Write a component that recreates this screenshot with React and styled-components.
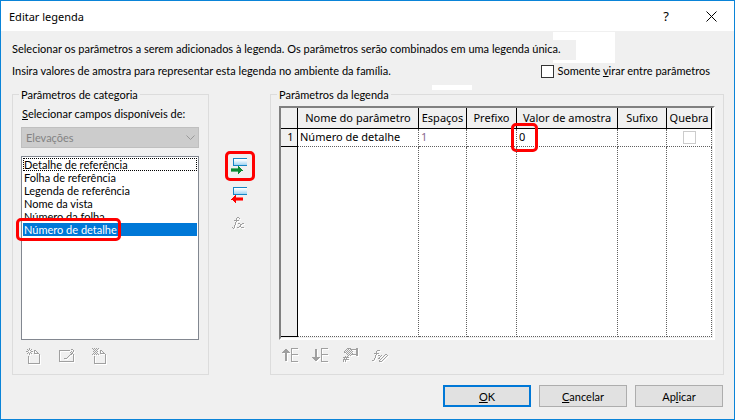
import React from 'react';
import styled, {createGlobalStyle, css} from "styled-components";

const GlobalStyle = createGlobalStyle`
  *{
    box-sizing: border-box;
  }
  body{
    margin: 0;
    background-color: #f0f0f0;
  }
`;

const uiFont = css`
  font-family: "Lato", "Noto Sans", sans-serif;
  font-size: 11px;
  color: #000;
`;

const gridFont = css`
  font-family: "Noto Sans", "Open Sans", sans-serif;
  font-size: 11px;
  color: #000;
`;

const Dialog = styled.div`
  ${uiFont}
  min-height: 100vh;
  display: flex;
  flex-direction: column;
  border: 1px solid #0a84d8;
  background-color: #f0f0f0;
  position: relative;
`;

const TitleBar = styled.header`
  display: flex;
  align-items: center;
  height: 30px;
  padding-left: 8px;
  padding-right: 8px;
  background-color: #fff;
`;

const Title = styled.h1`
  ${gridFont}
  flex: 1;
  margin: 0;
  font-weight: 400;
`;

const TitleButton = styled.button`
  ${gridFont}
  display: flex;
  align-items: center;
  justify-content: center;
  width: 30px;
  height: 24px;
  margin-left: 15px;
  padding: 0;
  border: none;
  background: none;
  font-size: 13px;
`;

const Content = styled.main`
  position: relative;
  flex: 1;
  display: flex;
  flex-direction: column;
  padding: 7px 10px 12px 11px;
`;

const IntroRow = styled.div`
  display: flex;
  justify-content: space-between;
  line-height: 22px;
  padding-right: 14px;
  white-space: nowrap;
`;

const CheckLabel = styled.label`
  display: flex;
  align-items: center;
  gap: 4px;
`;

const CheckBox = styled.input`
  appearance: none;
  width: 13px;
  height: 13px;
  margin: 0;
  border: 1px solid ${props => props.disabled ? "#ccc" : "#333"};
  background-color: #fff;
`;

const Patch = styled.span`
  position: absolute;
  left: ${props => props.$x}px;
  top: ${props => props.$y}px;
  width: ${props => props.$w}px;
  height: ${props => props.$h}px;
  background-color: ${props => props.$color || "#fff"};
`;

const Columns = styled.div`
  flex: 1;
  display: grid;
  grid-template-columns: 197px 61px 1fr;
  padding-top: 5px;
`;

const Group = styled.fieldset`
  min-width: 0;
  margin: 0;
  padding: ${props => props.$narrow ? "5px 9px 10px 8px" : "4px 8px 10px 8px"};
  border: 1px solid #dcdcdc;
`;

const Legend = styled.legend`
  margin-left: -2px;
  padding: 0 2px;
  line-height: 15px;
`;

const FieldLabel = styled.label`
  display: block;
  padding-left: 1px;
  line-height: 14px;
  margin-bottom: 6px;
`;

const DropDown = styled.div`
  position: relative;
  margin-bottom: 8px;
  svg{
    position: absolute;
    right: 4px;
    top: 8px;
  }
`;

const DropDownSelect = styled.select`
  ${uiFont}
  appearance: none;
  display: block;
  width: 100%;
  height: 21px;
  padding: 0 4px;
  border: 1px solid #bfbfbf;
  border-radius: 0;
  background-color: #ccc;
  color: #838383;
  opacity: 1;
`;

const ListWrapper = styled.div`
  position: relative;
`;

const List = styled.select`
  ${uiFont}
  appearance: none;
  display: block;
  width: 100%;
  height: 184px;
  padding: 1px;
  border: 1px solid #828790;
  border-radius: 0;
  background-color: #fff;
  overflow: hidden;
  outline: none;
`;

const ListItem = styled.option`
  height: 13px;
  min-height: 13px;
  padding: 0 1px;
  line-height: 13px;
  color: #000;
  &:first-child{
    outline: 1px dotted #000;
    outline-offset: -1px;
  }
  &:checked{
    background: #0078d7 linear-gradient(#0078d7, #0078d7);
    color: #fff;
    -webkit-text-fill-color: #fff;
  }
`;

const Callout = styled.span`
  position: absolute;
  left: ${props => props.$x}px;
  top: ${props => props.$y}px;
  width: ${props => props.$w}px;
  height: ${props => props.$h}px;
  border: 3px solid #f00;
  border-radius: 5px;
  pointer-events: none;
`;

const Tools = styled.div`
  display: flex;
  gap: ${props => props.$gap}px;
  padding-top: 8px;
  padding-left: ${props => props.$left}px;
`;

const ToolButton = styled.button`
  display: block;
  width: 18px;
  height: 16px;
  padding: 0;
  border: none;
  background: none;
  svg{
    display: block;
  }
`;

const Transfer = styled.div`
  display: flex;
  flex-direction: column;
  align-items: center;
  padding-top: 64px;
`;

const TransferButton = styled.button`
  position: relative;
  display: flex;
  align-items: center;
  justify-content: center;
  width: 30px;
  height: 29px;
  padding: 0 2px 0 0;
  border: none;
  background: none;
`;

const GridFrame = styled.div`
  padding: 0 1px 1px 0;
  border-style: solid;
  border-width: 2px;
  border-color: #808080 #fff #fff #808080;
`;

const Grid = styled.table`
  ${gridFont}
  width: 100%;
  table-layout: fixed;
  border-collapse: separate;
  border-spacing: 0;
  background-color: #fff;
`;

const HeadCell = styled.th`
  height: 21px;
  padding: 0;
  border-right: 1px solid #000;
  border-bottom: 1px solid #000;
  background-color: #f0f0f0;
  font-weight: 400;
  line-height: 18px;
  white-space: nowrap;
  text-align: center;
`;

const RowHead = styled(HeadCell)`
  height: ${props => props.$tall ? 190 : 18}px;
  line-height: 15px;
  padding-left: 3px;
  vertical-align: top;
`;

const Cell = styled.td`
  position: relative;
  padding: 0 2px;
  border-right: 1px dotted #606060;
  border-bottom: 1px dotted #606060;
  line-height: 15px;
  vertical-align: top;
  white-space: nowrap;
  color: ${props => props.$muted ? "#8a6a8e" : "#000"};
  input{
    display: block;
    margin: 2px auto 0;
  }
`;

const Footer = styled.footer`
  display: flex;
  justify-content: flex-end;
  gap: 8px;
  padding-top: 10px;
  padding-right: 1px;
`;

const Button = styled.button`
  ${uiFont}
  width: 88px;
  height: 22px;
  padding: 0;
  border: ${props => props.$primary ? "2px solid #0078d7" : "1px solid #adadad"};
  background-color: #e1e1e1;
`;

const ICONS = {
    create: [
        "...#...........",
        ".#.#.#.........",
        "..#.#...##.....",
        "##...##.#.#....",
        "..#.#...#..#...",
        ".#.#.#..#####..",
        "...#.........#.",
        ".............#.",
        "..#..........#.",
        "..#..........#.",
        "..#..........#.",
        "..#..........#.",
        "..#..........#.",
        "..#..........#.",
        "..#..........#.",
        "..############."
    ],
    rename: [
        "",
        "............##.",
        "###########...#",
        "#...........#.#",
        "#..........#.#.",
        "#...........##.",
        "#..........##.#",
        "#.........#...#",
        "#........#....#",
        "#.......#.....#",
        "#....###......#",
        "#.............#",
        "#.............#",
        "###############"
    ],
    remove: [
        "#.#.#.#........",
        ".#.#.#.........",
        "..#.#...##.....",
        ".#.#.#..#.#....",
        "..#.#...#..#...",
        ".#.#.#..#####..",
        "#.#.#.#......#.",
        ".............#.",
        "..#..........#.",
        "..#..........#.",
        "..#..........#.",
        "..#..........#.",
        "..#..........#.",
        "..#..........#.",
        "..#..........#.",
        "..############."
    ],
    up: [
        ".........#######",
        "...##....#",
        "..####...#",
        ".######..#",
        "########.#",
        "...##....#",
        "...##....#######",
        "...##....#",
        "...##....#",
        "...##....#",
        "...##....#",
        "...##....#",
        "...##....#",
        ".........#######"
    ],
    down: [
        ".........#######",
        "...##....#",
        "...##....#",
        "...##....#",
        "...##....#",
        "...##....#",
        "...##....#######",
        "...##....#",
        "...##....#",
        "########.#",
        ".######..#",
        "..####...#",
        "...##....#",
        ".........#######"
    ],
    sample: [
        ".....####.....##",
        "....#.#.########",
        "...#.#.#.#....##",
        "..#.#.#.#.#...##",
        "..##.#.#.#....##",
        "....#.#.#.#...##",
        ".....#.#.#######",
        "......#.#.....##",
        "...#.#..........",
        ".######.........",
        "..#.#...........",
        ".######.........",
        ".#.#............",
        ".#.#............"
    ],
    formulaEdit: [
        "",
        "",
        ".....###........",
        "....#...........",
        "....#...........",
        "..#####.........",
        "....#........##.",
        "...#..##.#..#..#",
        "...#....#..#..#.",
        "...#...#..#..#..",
        "..#...##.#..#...",
        "..#.....#..#....",
        "##.....#..#.....",
        ".......###......"
    ],
    formula: [
        ".....##.....",
        "....#..#....",
        "....#.......",
        "..#####.....",
        "....#.......",
        "...#........",
        "...#..##..##",
        "...#....##..",
        "..#.....#...",
        "..#....##...",
        "#.#..##..###",
        ".#.........."
    ]
};

const toPath = rows => rows.map((row, y) => row.split("").map((dot, x) => (
    dot === "#" ? `M${x} ${y}h1v1h-1z` : ""
)).join("")).join("");

// disabled toolbar glyph: grey pixels over a white edge
const EtchedIcon = ({name, width = 17, height = 17}) => {
    const d = toPath(ICONS[name]);
    return (
        <svg width={width} height={height} viewBox={`0 0 ${width} ${height}`} shapeRendering="crispEdges" aria-hidden="true">
            <path d={d} fill="#fff" transform="translate(1 1)"/>
            <path d={d} fill="#a0a0a0"/>
        </svg>
    );
};

const TransferIcon = ({back}) => (
    <svg width="16" height="16" viewBox="0 0 16 16" shapeRendering="crispEdges" aria-hidden="true">
        <defs>
            <linearGradient id={back ? "barBack" : "barAdd"} x1="0" y1="0" x2="0" y2="1">
                <stop offset="0.2" stopColor="#fff"/>
                <stop offset="1" stopColor="#8fcdf0"/>
            </linearGradient>
        </defs>
        <rect x="2" y="0" width="14" height="8" fill={`url(#${back ? "barBack" : "barAdd"})`}/>
        <path d="M2 0h14v1H3v6h13v1H2z" fill="#1585c5"/>
        {back
            ? <path d="M0 12h1v-1h1v-1h1V9h1V8h1v2h7v4H5v2H4v-1H3v-1H2v-1H0z" fill="#f00"/>
            : <path d="M12 12h-1v-1h-1v-1H9V9H8V8H7v2H0v4h7v2h1v-1h1v-1h1v-1h2z" fill="#0a8a34"/>}
        <path d={back ? "M5 10h7v1H5zM5 13h7v1H5z" : "M0 10h7v1H0zM0 13h7v1H0z"} fill={back ? "#ff6b6b" : "#5fb57c"}/>
    </svg>
);

const FIELDS = [
    "Detalhe de referência",
    "Folha de referência",
    "Legenda de referência",
    "Nome da vista",
    "Número da folha",
    "Número de detalhe"
];

const COLUMNS = [
    {title: "Nome do parâmetro", width: 121},
    {title: "Espaços", width: 48},
    {title: "Prefixo", width: 50},
    {title: "Valor de amostra"},
    {title: "Sufixo", width: 49},
    {title: "Quebra", width: 45}
];

export default class App extends React.Component {
    state = {
        field: "Número de detalhe",
        flip: false
    }

    changeField = (event) => {
        this.setState({
            field: event.target.value
        })
    }

    toggleFlip = () => {
        this.setState((prevState) => ({
            flip: !prevState.flip
        }));
    }

    render() {
        const {field, flip} = this.state;
        return (
            <Dialog>
                <GlobalStyle/>
                <TitleBar>
                    <Title>Editar legenda</Title>
                    <TitleButton aria-label="Ajuda">?</TitleButton>
                    <TitleButton aria-label="Fechar">
                        <svg width="11" height="11" viewBox="0 0 11 11" aria-hidden="true">
                            <path d="M0.5 0.5L10.5 10.5M10.5 0.5L0.5 10.5" stroke="#000" fill="none"/>
                        </svg>
                    </TitleButton>
                </TitleBar>
                <Patch $x={552} $y={31} $w={62} $h={31}/>
                <Patch $x={552} $y={39} $w={23} $h={20} $color="#f0f0f0"/>
                <Patch $x={431} $y={84} $w={40} $h={5}/>
                <Content>
                    <IntroRow>
                        <span>Selecionar os parâmetros a serem adicionados à legenda. Os parâmetros serão combinados em uma legenda única.</span>
                    </IntroRow>
                    <IntroRow>
                        <span>Insira valores de amostra para representar esta legenda no ambiente da família.</span>
                        <CheckLabel>
                            <CheckBox type="checkbox" checked={flip} onChange={this.toggleFlip}/>
                            <span>Somente <u>v</u>irar entre parâmetros</span>
                        </CheckLabel>
                    </IntroRow>
                    <Columns>
                        <Group $narrow>
                            <Legend>Parâmetros de categoria</Legend>
                            <FieldLabel htmlFor="category"><u>S</u>elecionar campos disponíveis de:</FieldLabel>
                            <DropDown>
                                <DropDownSelect id="category" disabled>
                                    <option>Elevações</option>
                                </DropDownSelect>
                                <svg width="9" height="6" viewBox="0 0 9 6" aria-hidden="true">
                                    <path d="M0.5 0.5L4.5 4.5L8.5 0.5" stroke="#999" fill="none"/>
                                </svg>
                            </DropDown>
                            <ListWrapper>
                                <List size={6} value={field} onChange={this.changeField} aria-label="Campos disponíveis">
                                    {FIELDS.map((name) => (
                                        <ListItem key={name} value={name}>{name}</ListItem>
                                    ))}
                                </List>
                                <Callout $x={-5} $y={62} $w={105} $h={23}/>
                            </ListWrapper>
                            <Tools $gap={15} $left={5}>
                                <ToolButton aria-label="Novo" disabled><EtchedIcon name="create"/></ToolButton>
                                <ToolButton aria-label="Editar" disabled><EtchedIcon name="rename"/></ToolButton>
                                <ToolButton aria-label="Excluir" disabled><EtchedIcon name="remove"/></ToolButton>
                            </Tools>
                        </Group>
                        <Transfer>
                            <TransferButton aria-label="Adicionar">
                                <TransferIcon/>
                                <Callout $x={0} $y={0} $w={30} $h={30}/>
                            </TransferButton>
                            <TransferButton aria-label="Remover"><TransferIcon back/></TransferButton>
                            <TransferButton aria-label="Fórmula" disabled>
                                <EtchedIcon name="formula" width={13} height={13}/>
                            </TransferButton>
                        </Transfer>
                        <Group>
                            <Legend>Parâmetros da legenda</Legend>
                            <GridFrame>
                                <Grid>
                                    <colgroup>
                                        <col width="17"/>
                                        {COLUMNS.map(({title, width}) => <col key={title} width={width}/>)}
                                    </colgroup>
                                    <thead>
                                        <tr>
                                            <HeadCell/>
                                            {COLUMNS.map(({title}) => <HeadCell key={title} scope="col">{title}</HeadCell>)}
                                        </tr>
                                    </thead>
                                    <tbody>
                                        <tr>
                                            <RowHead scope="row">1</RowHead>
                                            <Cell>Número de detalhe</Cell>
                                            <Cell $muted>1</Cell>
                                            <Cell/>
                                            <Cell>0<Callout $x={-6} $y={-6} $w={27} $h={29}/></Cell>
                                            <Cell/>
                                            <Cell><CheckBox type="checkbox" aria-label="Quebra" disabled/></Cell>
                                        </tr>
                                        <tr>
                                            <RowHead $tall/>
                                            {COLUMNS.map(({title}) => <Cell key={title}/>)}
                                        </tr>
                                    </tbody>
                                </Grid>
                            </GridFrame>
                            <Tools $gap={12} $left={3}>
                                <ToolButton aria-label="Mover para cima" disabled><EtchedIcon name="up"/></ToolButton>
                                <ToolButton aria-label="Mover para baixo" disabled><EtchedIcon name="down"/></ToolButton>
                                <ToolButton aria-label="Formato" disabled><EtchedIcon name="sample"/></ToolButton>
                                <ToolButton aria-label="Editar fórmula" disabled><EtchedIcon name="formulaEdit"/></ToolButton>
                            </Tools>
                        </Group>
                    </Columns>
                    <Footer>
                        <Button $primary><u>O</u>K</Button>
                        <Button><u>C</u>ancelar</Button>
                        <Button>Ap<u>l</u>icar</Button>
                    </Footer>
                </Content>
            </Dialog>
        )
    }
}
